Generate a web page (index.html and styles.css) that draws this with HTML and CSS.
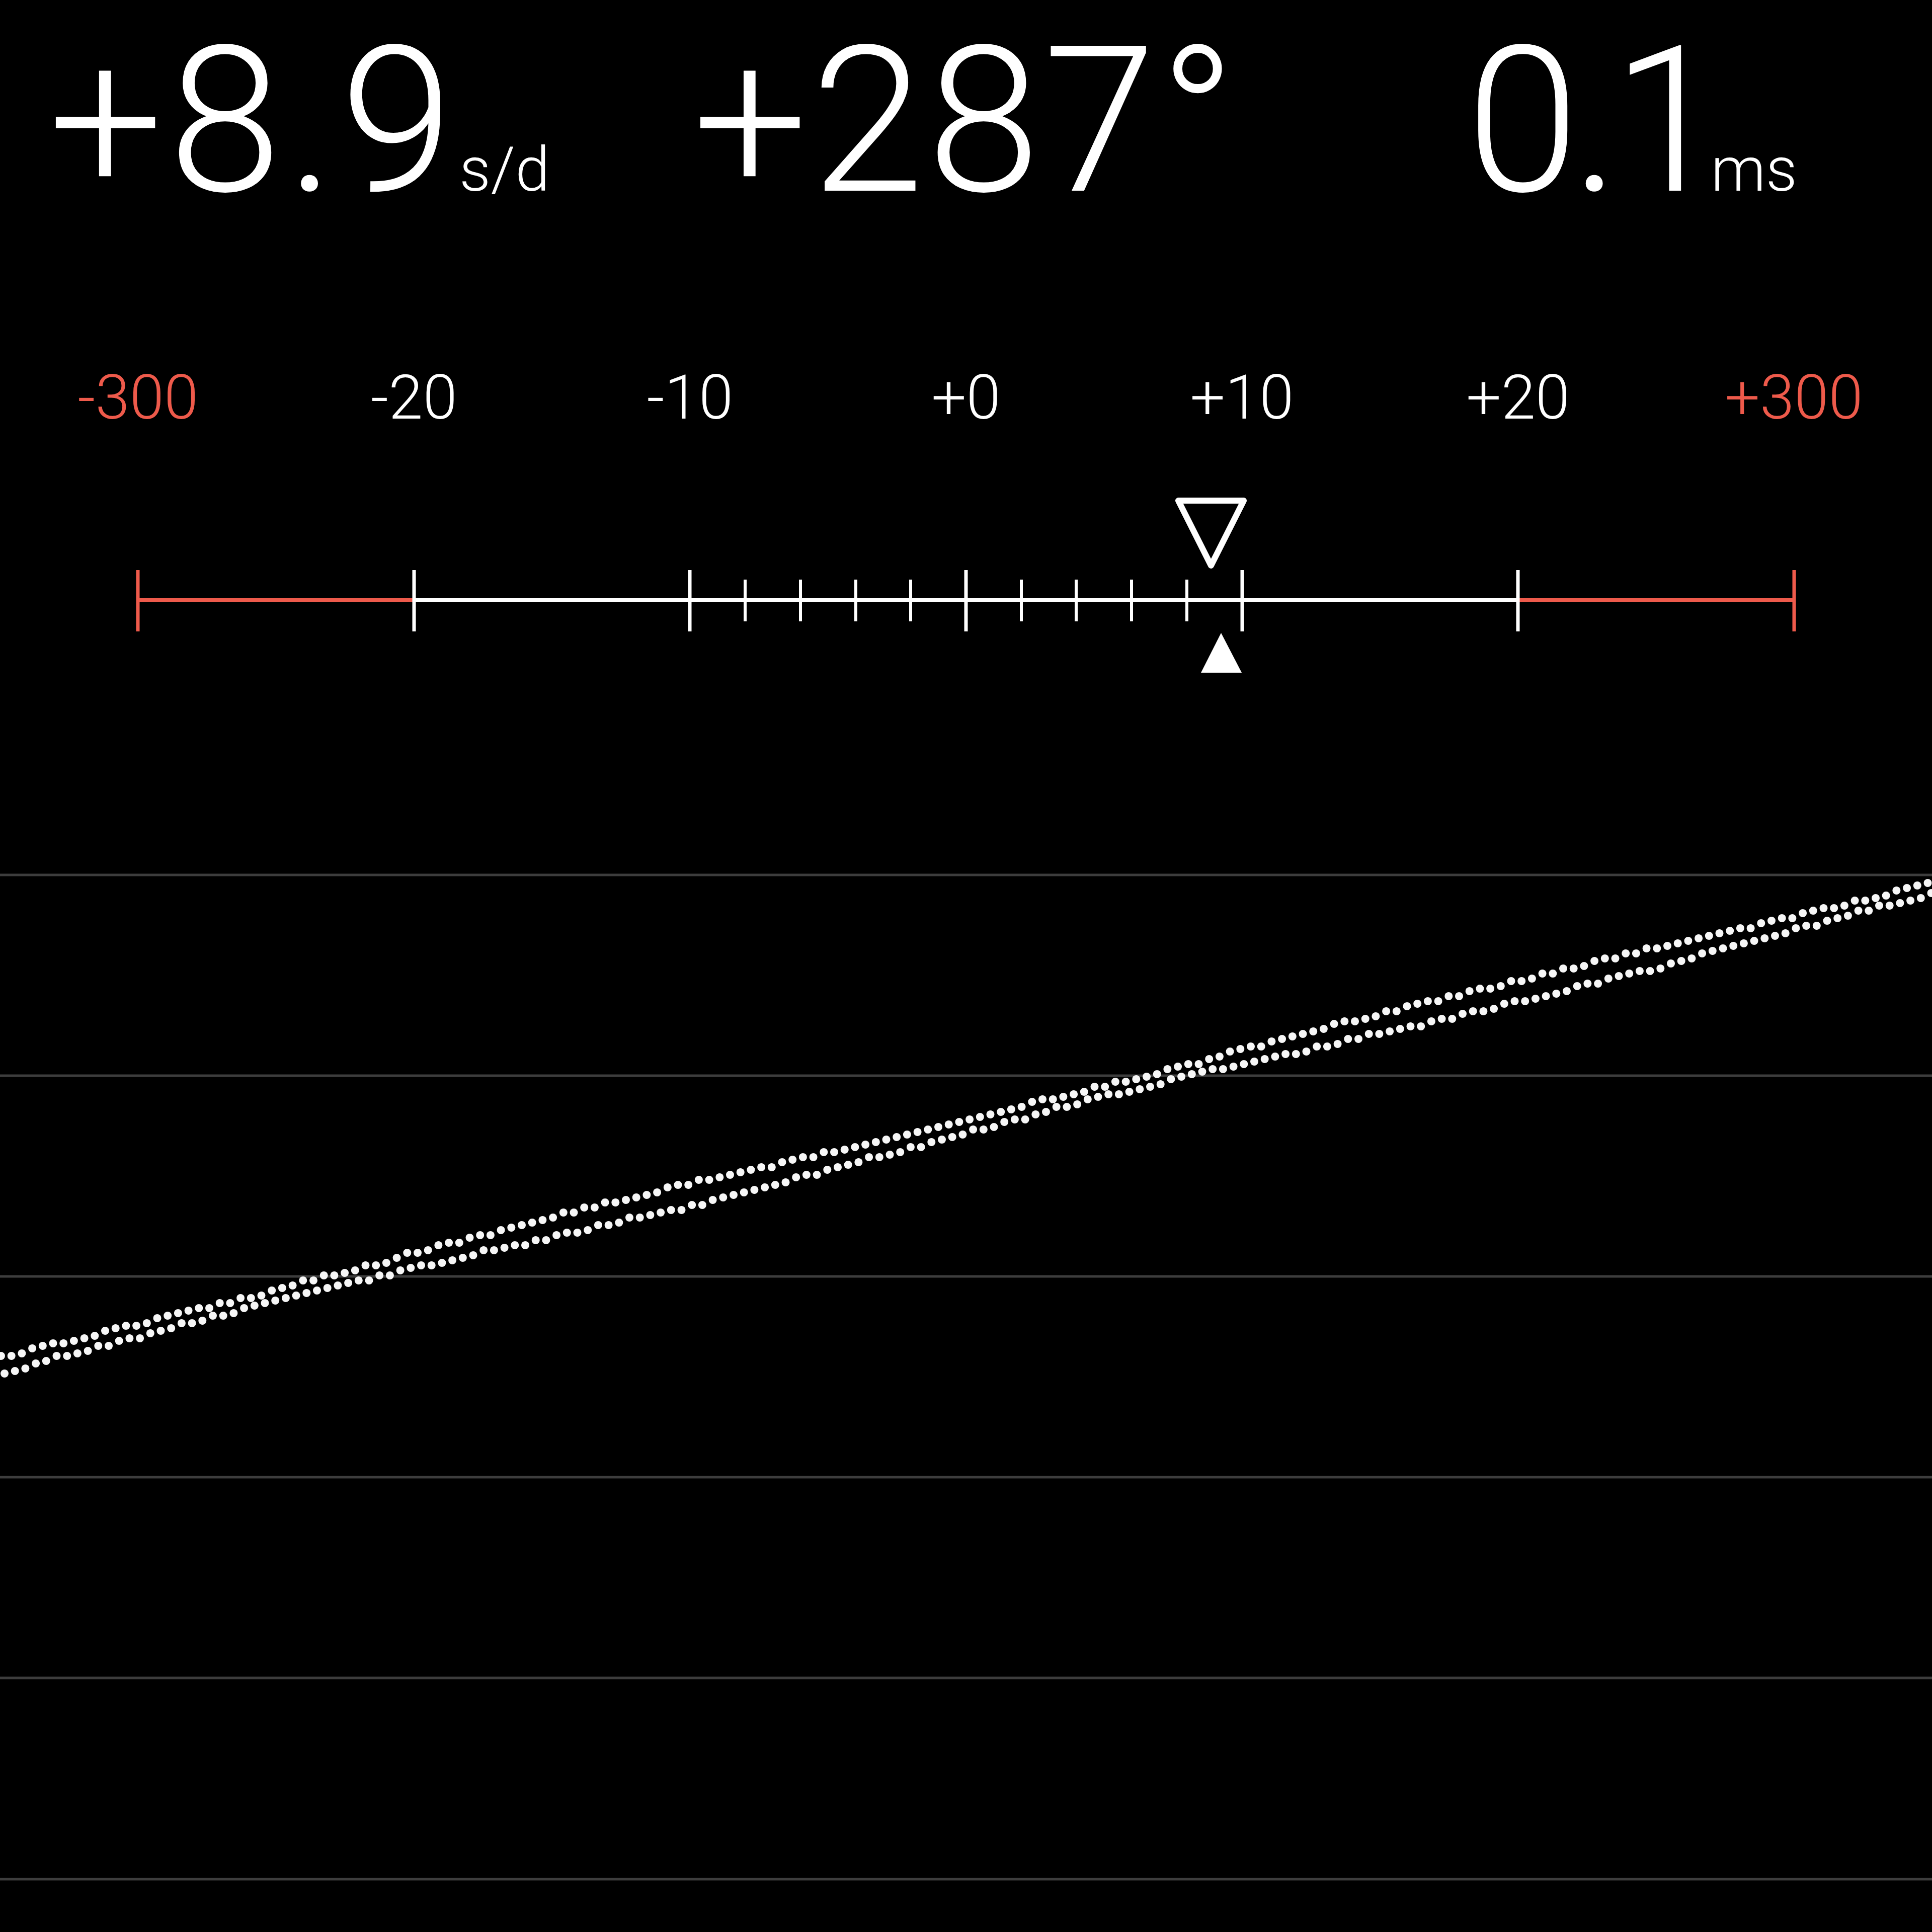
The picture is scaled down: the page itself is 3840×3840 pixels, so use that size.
FILE: index.html
```html
<!DOCTYPE html>
<html lang="en">
  <head>
    <meta charset="UTF-8" />
    <meta name="viewport" content="width=device-width, initial-scale=1.0" />
    <title>Timegrapher</title>
    <link rel="stylesheet" href="styles.css">
  </head>
  <body>
    <div class="screen">
      <div class="readouts">
        <div class="readout rate">+8.9<span class="unit">s/d</span></div>
        <div class="readout beat">+287°</div>
        <div class="readout error">0.1<span class="unit">ms</span></div>
      </div>

      <div class="scale-labels">
        <span class="limit">-300</span>
        <span>-20</span>
        <span>-10</span>
        <span>+0</span>
        <span>+10</span>
        <span>+20</span>
        <span class="limit">+300</span>
      </div>

      <!-- rate scale, drawn in page coordinates -->
      <svg class="ruler" viewBox="0 852 3840 548">
        <g class="axis">
          <line class="red" x1="274" y1="1193" x2="823" y2="1193" />
          <line x1="823" y1="1193" x2="3017" y2="1193" />
          <line class="red" x1="3017" y1="1193" x2="3566" y2="1193" />
        </g>
        <g class="major">
          <line class="red" x1="274" y1="1133" x2="274" y2="1255" />
          <line x1="823" y1="1133" x2="823" y2="1255" />
          <line x1="1371" y1="1133" x2="1371" y2="1255" />
          <line x1="1920" y1="1133" x2="1920" y2="1255" />
          <line x1="2469" y1="1133" x2="2469" y2="1255" />
          <line x1="3017" y1="1133" x2="3017" y2="1255" />
          <line class="red" x1="3566" y1="1133" x2="3566" y2="1255" />
        </g>
        <g class="minor">
          <line x1="1481" y1="1152" x2="1481" y2="1235" />
          <line x1="1591" y1="1152" x2="1591" y2="1235" />
          <line x1="1701" y1="1152" x2="1701" y2="1235" />
          <line x1="1810" y1="1152" x2="1810" y2="1235" />
          <line x1="2030" y1="1152" x2="2030" y2="1235" />
          <line x1="2139" y1="1152" x2="2139" y2="1235" />
          <line x1="2249" y1="1152" x2="2249" y2="1235" />
          <line x1="2359" y1="1152" x2="2359" y2="1235" />
        </g>
        <polygon class="marker-now" points="2342,995 2472,995 2407,1124" />
        <polygon class="marker-avg" points="2427,1258 2387,1337 2468,1337" />
      </svg>

      <svg class="graph" viewBox="0 1400 3840 2440">
        <g class="grid">
          <line x1="0" y1="1739" x2="3840" y2="1739" />
          <line x1="0" y1="2138" x2="3840" y2="2138" />
          <line x1="0" y1="2537" x2="3840" y2="2537" />
          <line x1="0" y1="2936" x2="3840" y2="2936" />
          <line x1="0" y1="3335" x2="3840" y2="3335" />
          <line x1="0" y1="3735" x2="3840" y2="3735" />
        </g>
        <g id="trace" class="trace"></g>
      </svg>
    </div>

    <script>
      const svgNs = 'http://www.w3.org/2000/svg';
      const trace = document.getElementById('trace');
      let seed = 12345;

      function rand() {
        seed = (seed * 16807) % 2147483647;
        return seed / 2147483647;
      }

      // one dotted line of tick samples, y goes from yStart to yEnd
      function addTrace(xStart, yStart, yEnd, wobble, phase) {
        for (let x = xStart; x < 3850; x += 20.7) {
          let y = yStart + (yEnd - yStart) * x / 3840;
          y += wobble * Math.sin(x / 270 + phase) + (rand() - 0.5) * 6;
          y = Math.round(y / 5) * 5;
          const dot = document.createElementNS(svgNs, 'circle');
          dot.setAttribute('cx', x.toFixed(1));
          dot.setAttribute('cy', y);
          dot.setAttribute('r', 8);
          trace.appendChild(dot);
        }
      }

      addTrace(2, 2695, 1750, 5, 0.4);
      addTrace(9, 2727, 1782, 7, 2.6);
    </script>
  </body>
</html>
```

FILE: styles.css
```css
body {
  margin: 0;
  background-color: #000;
  color: #fff;
  font-family: Roboto, 'Liberation Sans', sans-serif;
}
.screen {
  width: 3840px;
  height: 3840px;
  overflow: hidden;
}
.readouts {
  display: grid;
  grid-template-columns: repeat(3, 1fr);
  padding-top: 4px;
  font-size: 405px;
  font-weight: 300;
  line-height: 1.172;
}
.readout {
  white-space: nowrap;
}
.rate {
  justify-self: start;
  margin-left: 96px;
  letter-spacing: 10px;
}
.beat {
  justify-self: center;
  letter-spacing: 6px;
}
.error {
  justify-self: end;
  margin-right: 268px;
  letter-spacing: -16px;
}
.unit {
  font-size: 123px;
  margin-left: 2px;
  letter-spacing: 0;
}
.error .unit {
  margin-left: -12px;
}
.scale-labels {
  display: grid;
  grid-template-columns: repeat(7, 1fr);
  margin-top: 250px;
  font-size: 123px;
  font-weight: 300;
  line-height: 1;
  text-align: center;
}
.limit {
  color: #ee5a4b;
}
.ruler,
.graph {
  display: block;
  width: 3840px;
}
.ruler {
  height: 548px;
}
.graph {
  height: 2440px;
}
.ruler line {
  stroke: #fff;
}
.ruler line.red {
  stroke: #ee5a4b;
}
.axis line {
  stroke-width: 8;
}
.major line {
  stroke-width: 7;
}
.minor line {
  stroke-width: 6;
}
.marker-now {
  fill: none;
  stroke: #fff;
  stroke-width: 12;
  stroke-linejoin: round;
}
.marker-avg {
  fill: #fff;
}
.grid line {
  stroke: #3d3d3d;
  stroke-width: 5;
}
.trace circle {
  fill: #f6f6f6;
}
```
